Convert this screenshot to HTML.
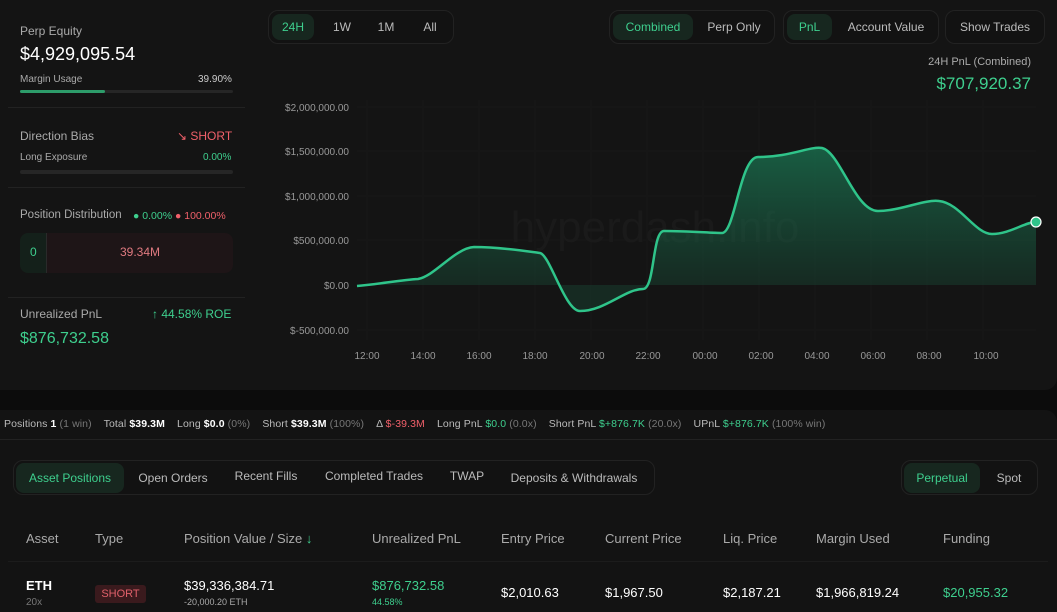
<!DOCTYPE html>
<html><head><meta charset="utf-8"><style>
*{box-sizing:border-box;margin:0;padding:0}
body{width:1057px;height:612px;overflow:hidden;background:#0c0c0c;font-family:"Liberation Sans",sans-serif;color:#ddd;position:relative}
.a{position:absolute;white-space:nowrap}
.g{color:#3ecf8e}.r{color:#f0606a}.m{color:#aaa}.d{color:#777}
.top{position:absolute;left:0;top:0;width:1057px;height:390px;background:#141414;border-radius:0 0 12px 0}
.hr{position:absolute;left:8px;width:237px;height:1px;background:#222}
.grp{position:absolute;height:34px;border:1px solid #222;border-radius:10px;background:#121212}
.btn{position:absolute;top:3px;height:26px;line-height:26px;font-size:12px;color:#bbb;text-align:center;border-radius:8px}
.on{background:#17271f;color:#3ecf8e}
.bot{position:absolute;left:0;top:410px;width:1057px;height:202px;background:#131313;border-radius:0 12px 0 0}
.th{font-size:13px;color:#aaa;top:531px}
</style></head><body>
<div class="top"></div>
<div class="a m" style="left:20px;top:24px;font-size:12px">Perp Equity</div>
<div class="a" style="left:20px;top:44px;font-size:18px;color:#fff">$4,929,095.54</div>
<div class="a m" style="left:20px;top:74px;font-size:10px">Margin Usage</div>
<div class="a" style="left:198px;top:74px;font-size:10px;color:#ccc">39.90%</div>
<div class="a" style="left:20px;top:90px;width:213px;height:3px;background:#262626;border-radius:2px"></div>
<div class="a" style="left:20px;top:90px;width:85px;height:3px;background:#2d9c6a;border-radius:2px"></div>
<div class="hr" style="top:107px"></div>
<div class="a m" style="left:20px;top:129px;font-size:12px">Direction Bias</div>
<div class="a r" style="left:177px;top:129px;font-size:12px">↘ SHORT</div>
<div class="a m" style="left:20px;top:152px;font-size:10px">Long Exposure</div>
<div class="a g" style="left:203px;top:152px;font-size:10px">0.00%</div>
<div class="a" style="left:20px;top:170px;width:213px;height:4px;background:#262626;border-radius:2px"></div>
<div class="hr" style="top:187px"></div>
<div class="a m" style="left:20px;top:209px;font-size:11.5px">Position Distribution</div>
<div class="a" style="left:133px;top:210px;font-size:10.5px"><span class="g">●</span> <span class="g">0.00%</span> <span class="r">●</span> <span class="r">100.00%</span></div>
<div class="a" style="left:20px;top:233px;width:213px;height:40px;background:#1e1517;border-radius:8px;overflow:hidden">
<div style="position:absolute;left:0;top:0;width:27px;height:40px;background:#14201a;border-right:1px solid #2a2a2a"></div>
<div class="a g" style="left:10px;top:12px;font-size:12px">0</div>
<div class="a" style="left:100px;top:12px;font-size:12px;color:#e07a80">39.34M</div></div>
<div class="hr" style="top:297px"></div>
<div class="a m" style="left:20px;top:307px;font-size:12px">Unrealized PnL</div>
<div class="a g" style="left:152px;top:307px;font-size:12px">↑ 44.58% ROE</div>
<div class="a g" style="left:20px;top:330px;font-size:16px">$876,732.58</div>
<div class="grp" style="left:268px;top:10px;width:186px"><div class="btn on" style="left:3px;width:42px">24H</div><div class="btn" style="left:52px;width:42px">1W</div><div class="btn" style="left:96px;width:42px">1M</div><div class="btn" style="left:141px;width:40px">All</div></div>
<div class="grp" style="left:609px;top:10px;width:166px"><div class="btn on" style="left:3px;width:80px">Combined</div><div class="btn" style="left:89px;width:70px">Perp Only</div></div>
<div class="grp" style="left:783px;top:10px;width:156px"><div class="btn on" style="left:3px;width:45px">PnL</div><div class="btn" style="left:54px;width:96px">Account Value</div></div>
<div class="grp" style="left:945px;top:10px;width:100px"><div class="btn" style="left:2px;width:94px">Show Trades</div></div>
<div class="a m" style="right:26px;top:56px;font-size:11px">24H PnL (Combined)</div>
<div class="a g" style="right:26px;top:74px;font-size:17px">$707,920.37</div>
<svg class="a" style="left:0;top:0" width="1057" height="390">
<defs><linearGradient id="f" x1="0" y1="140" x2="0" y2="286" gradientUnits="userSpaceOnUse"><stop offset="0" stop-color="#1a7a55" stop-opacity=".75"/><stop offset="1" stop-color="#1a6a4a" stop-opacity=".25"/></linearGradient></defs>
<g stroke="#171717" stroke-width="1">
<line x1="367" y1="100" x2="367" y2="340"/><line x1="423" y1="100" x2="423" y2="340"/><line x1="479" y1="100" x2="479" y2="340"/><line x1="535" y1="100" x2="535" y2="340"/><line x1="591" y1="100" x2="591" y2="340"/><line x1="647" y1="100" x2="647" y2="340"/><line x1="703" y1="100" x2="703" y2="340"/><line x1="759" y1="100" x2="759" y2="340"/><line x1="815" y1="100" x2="815" y2="340"/><line x1="871" y1="100" x2="871" y2="340"/><line x1="927" y1="100" x2="927" y2="340"/><line x1="983" y1="100" x2="983" y2="340"/>
<line x1="357" y1="107" x2="1036" y2="107"/><line x1="357" y1="151" x2="1036" y2="151"/><line x1="357" y1="196" x2="1036" y2="196"/><line x1="357" y1="240" x2="1036" y2="240"/><line x1="357" y1="330" x2="1036" y2="330"/>
</g>
<text x="655" y="242" font-size="44" fill="#1a1a1a" text-anchor="middle" font-family="Liberation Sans">hyperdash.info</text>
<path d="M357,286 C380,284 400,280 418,279 C435,276 455,248 474,247 C500,247 525,251 540,253 C550,255 565,311 580,311 C605,311 625,289 643,289 C655,289 652,231 664,231 C690,231 710,233 722,233 C735,233 740,157 758,157 C790,157 810,146 822,148 C840,152 855,211 878,211 C900,211 925,199 939,201 C960,203 975,234 992,234 C1010,234 1025,222 1036,222 L1036,285 L357,285 Z" fill="url(#f)"/>
<path d="M357,286 C380,284 400,280 418,279 C435,276 455,248 474,247 C500,247 525,251 540,253 C550,255 565,311 580,311 C605,311 625,289 643,289 C655,289 652,231 664,231 C690,231 710,233 722,233 C735,233 740,157 758,157 C790,157 810,146 822,148 C840,152 855,211 878,211 C900,211 925,199 939,201 C960,203 975,234 992,234 C1010,234 1025,222 1036,222" fill="none" stroke="#2fc48a" stroke-width="2.5"/>
<circle cx="1036" cy="222" r="5" fill="#2fc48a" stroke="#fff" stroke-width="1.2"/>
<g font-size="10" fill="#999" font-family="Liberation Sans" text-anchor="end">
<text x="349" y="111">$2,000,000.00</text><text x="349" y="155">$1,500,000.00</text><text x="349" y="200">$1,000,000.00</text><text x="349" y="244">$500,000.00</text><text x="349" y="289">$0.00</text><text x="349" y="334">$-500,000.00</text></g>
<g font-size="10" fill="#999" font-family="Liberation Sans" text-anchor="middle">
<text x="367" y="359">12:00</text><text x="423" y="359">14:00</text><text x="479" y="359">16:00</text><text x="535" y="359">18:00</text><text x="592" y="359">20:00</text><text x="648" y="359">22:00</text><text x="705" y="359">00:00</text><text x="761" y="359">02:00</text><text x="817" y="359">04:00</text><text x="873" y="359">06:00</text><text x="929" y="359">08:00</text><text x="986" y="359">10:00</text></g>
</svg>
<div class="bot"></div>
<div class="a" style="left:0;top:439px;width:1057px;height:1px;background:#222"></div>
<div class="a" style="left:4px;top:418px;font-size:10.5px;color:#bbb;letter-spacing:0.1px">Positions <b style="color:#fff">1</b> <span class="d">(1 win)</span> &nbsp;&nbsp; Total <b style="color:#fff">$39.3M</b> &nbsp;&nbsp; Long <b style="color:#fff">$0.0</b> <span class="d">(0%)</span> &nbsp;&nbsp; Short <b style="color:#fff">$39.3M</b> <span class="d">(100%)</span> &nbsp;&nbsp; Δ <span class="r">$-39.3M</span> &nbsp;&nbsp; Long PnL <span class="g">$0.0</span> <span class="d">(0.0x)</span> &nbsp;&nbsp; Short PnL <span class="g">$+876.7K</span> <span class="d">(20.0x)</span> &nbsp;&nbsp; UPnL <span class="g">$+876.7K</span> <span class="d">(100% win)</span></div>
<div class="grp" style="left:13px;top:460px;width:642px;height:35px"><div class="btn on" style="left:2px;top:2px;height:30px;line-height:30px;width:108px">Asset Positions</div><div class="btn" style="left:113px;top:2px;height:30px;line-height:30px;width:92px">Open Orders</div><div class="btn" style="left:212px;top:0px;height:30px;line-height:30px;width:80px">Recent Fills</div><div class="btn" style="left:305px;top:0px;height:30px;line-height:30px;width:110px">Completed Trades</div><div class="btn" style="left:430px;top:0px;height:30px;line-height:30px;width:46px">TWAP</div><div class="btn" style="left:490px;top:2px;height:30px;line-height:30px;width:140px">Deposits &amp; Withdrawals</div></div>
<div class="grp" style="left:901px;top:460px;width:137px;height:35px"><div class="btn on" style="left:2px;top:2px;height:30px;line-height:30px;width:76px">Perpetual</div><div class="btn" style="left:84px;top:2px;height:30px;line-height:30px;width:46px">Spot</div></div>
<div class="a th" style="left:26px">Asset</div><div class="a th" style="left:95px">Type</div><div class="a th" style="left:184px">Position Value / Size <span class="g">↓</span></div><div class="a th" style="left:372px">Unrealized PnL</div><div class="a th" style="left:501px">Entry Price</div><div class="a th" style="left:605px">Current Price</div><div class="a th" style="left:723px">Liq. Price</div><div class="a th" style="left:816px">Margin Used</div><div class="a th" style="left:943px">Funding</div>
<div class="a" style="left:8px;top:561px;width:1040px;height:1px;background:#1c1c1c"></div>
<div class="a" style="left:26px;top:578px;font-size:13px;color:#fff;font-weight:bold">ETH</div>
<div class="a d" style="left:26px;top:597px;font-size:10px">20x</div>
<div class="a" style="left:95px;top:585px;width:51px;height:18px;line-height:18px;text-align:center;background:#3a1a1d;color:#e0606a;font-size:11px;border-radius:3px">SHORT</div>
<div class="a" style="left:184px;top:578px;font-size:13px;color:#fff">$39,336,384.71</div>
<div class="a m" style="left:184px;top:597px;font-size:9px">-20,000.20 ETH</div>
<div class="a g" style="left:372px;top:578px;font-size:13px">$876,732.58</div>
<div class="a g" style="left:372px;top:597px;font-size:9px">44.58%</div>
<div class="a" style="left:501px;top:585px;font-size:13px;color:#fff">$2,010.63</div>
<div class="a" style="left:605px;top:585px;font-size:13px;color:#fff">$1,967.50</div>
<div class="a" style="left:723px;top:585px;font-size:13px;color:#fff">$2,187.21</div>
<div class="a" style="left:816px;top:585px;font-size:13px;color:#fff">$1,966,819.24</div>
<div class="a g" style="left:943px;top:585px;font-size:13px">$20,955.32</div>
</body></html>
